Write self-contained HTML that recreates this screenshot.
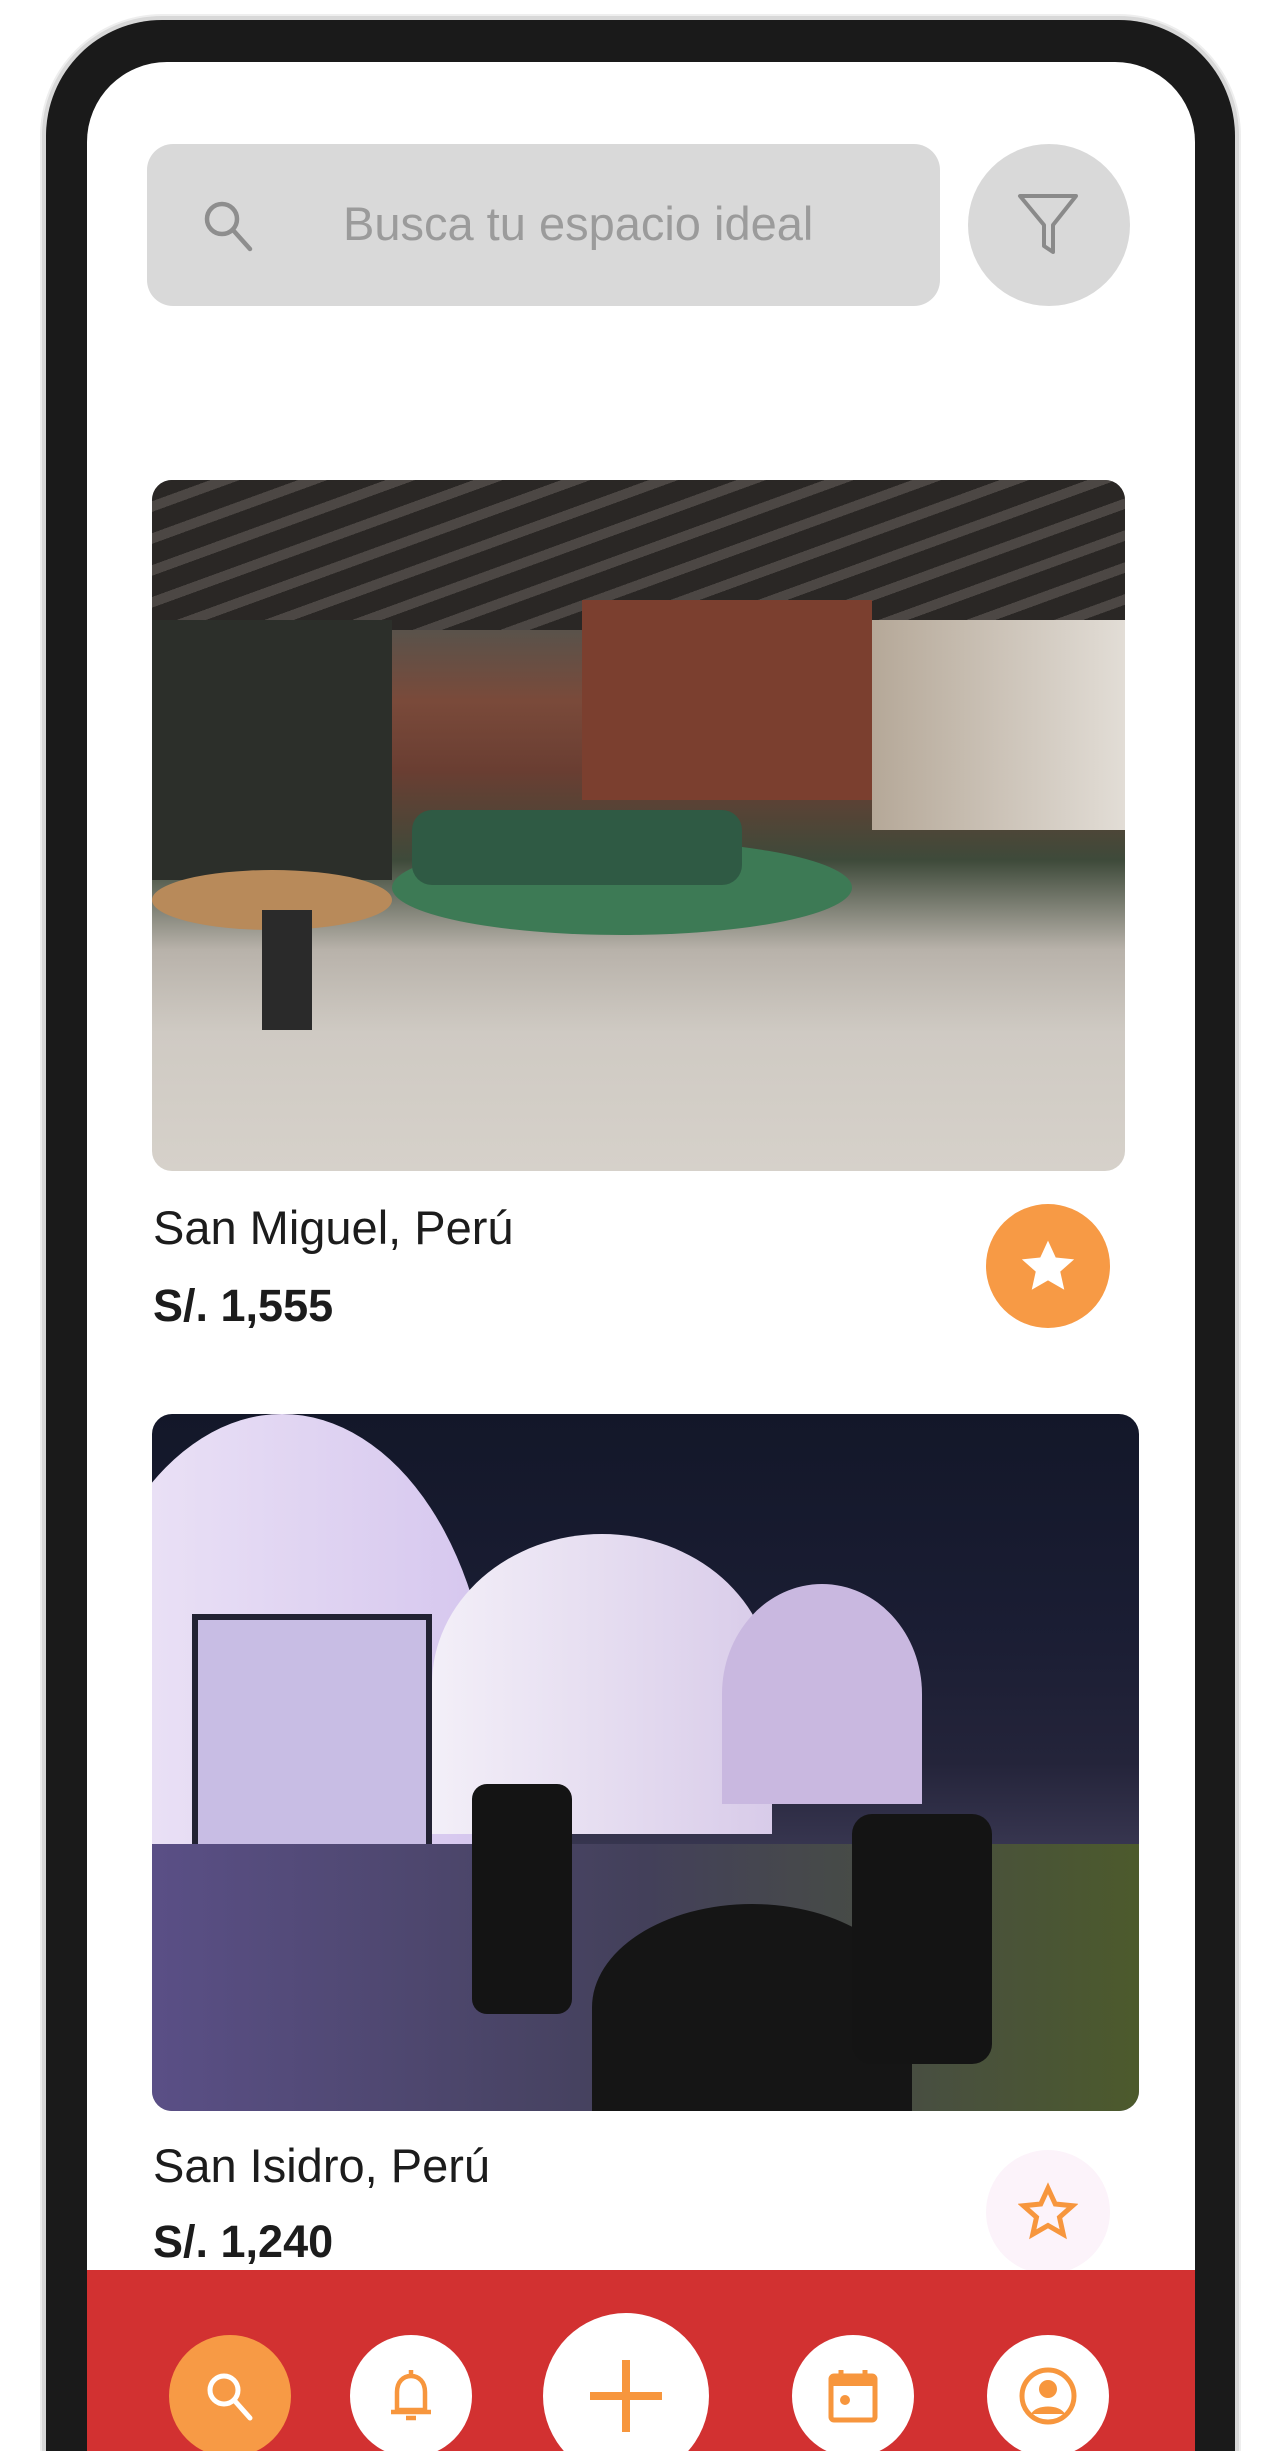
<!DOCTYPE html>
<html><head><meta charset="utf-8"><style>
*{margin:0;padding:0;box-sizing:border-box}
html,body{width:1286px;height:2451px;overflow:hidden}
body{background:#fff;font-family:"Liberation Sans",sans-serif}
#wrap{position:relative;width:1286px;height:2451px;overflow:hidden}
.abs{position:absolute}
.frame{left:42px;top:16px;width:1197px;height:2435px;border-radius:120px 120px 0 0;background:#1a1a1a;border:4px solid #d8d8d8;border-bottom:none;box-shadow:0 0 0 2px #eee}
.screen{left:87px;top:62px;width:1108px;height:2389px;border-radius:80px 80px 0 0;background:#fff;overflow:hidden}
.search{left:147px;top:144px;width:793px;height:162px;border-radius:26px;background:#d9d9d9}
.ph{left:343px;top:196px;font-size:47px;color:#9b9b9b}
.filter{left:968px;top:144px;width:162px;height:162px;border-radius:50%;background:#d9d9d9}
.img1{left:152px;top:480px;width:973px;height:691px;border-radius:20px;overflow:hidden;
background:linear-gradient(180deg,#2d2a28 0%,#4a4540 12%,#5a524a 22%,#7a4a3a 32%,#6a3e32 42%,#3e4a3a 55%,#b8b2aa 68%,#cfcac3 80%,#d6d1ca 100%)}
.img2{left:152px;top:1414px;width:987px;height:697px;border-radius:20px;overflow:hidden;
background:linear-gradient(180deg,#131729 0%,#1a1d33 30%,#24243a 50%,#3c3a55 65%,#4d4a66 80%,#555070 100%)}
.loc{left:153px;font-size:47px;color:#1c1c1c}
.price{left:153px;font-size:45px;font-weight:bold;color:#1c1c1c}
.circ{border-radius:50%;display:flex;align-items:center;justify-content:center}
.nav{left:87px;top:2270px;width:1108px;height:181px;background:#d23131}
</style></head><body><div id="wrap">
<div class="abs frame"></div>
<div class="abs screen"></div>
<div class="abs search"></div>
<svg class="abs" style="left:196px;top:193px" width="64" height="64" viewBox="0 0 64 64"><circle cx="26" cy="26" r="15" fill="none" stroke="#8e8e8e" stroke-width="4.5"/><path d="M37 37 L54 56" stroke="#8e8e8e" stroke-width="4.5" stroke-linecap="round"/></svg>
<div class="abs ph">Busca tu espacio ideal</div>
<div class="abs filter"></div>
<svg class="abs" style="left:1015px;top:190px" width="66" height="70" viewBox="0 0 66 70"><path d="M5 6 H61 L38 35 V62 L29 56 V35 Z" fill="none" stroke="#8a8a8a" stroke-width="4" stroke-linejoin="round"/></svg>

<div class="abs img1">
 <div class="abs" style="left:0;top:0;width:973px;height:150px;background:repeating-linear-gradient(160deg,#2a2725 0 20px,#4c4744 20px 30px)"></div>
 <div class="abs" style="left:430px;top:120px;width:290px;height:200px;background:#7b3f2f"></div>
 <div class="abs" style="left:720px;top:140px;width:253px;height:210px;background:linear-gradient(90deg,#b5a898,#e2ddd6)"></div>
 <div class="abs" style="left:0;top:140px;width:240px;height:260px;background:#2c2f2a"></div>
 <div class="abs" style="left:240px;top:360px;width:460px;height:95px;border-radius:50%;background:#3d7a55"></div>
 <div class="abs" style="left:260px;top:330px;width:330px;height:75px;border-radius:20px;background:#2f5a44"></div>
 <div class="abs" style="left:0;top:390px;width:240px;height:60px;border-radius:50%;background:#b88a5a"></div>
 <div class="abs" style="left:110px;top:430px;width:50px;height:120px;background:#2a2a2a"></div>
</div>
<div class="abs loc" style="top:1200px">San Miguel, Perú</div>
<div class="abs price" style="top:1280px">S/. 1,555</div>
<div class="abs circ" style="left:986px;top:1204px;width:124px;height:124px;background:#f79a45"><svg width="64" height="64" viewBox="0 0 24 24"><path d="M12 2.5l2.9 6.3 6.9.7-5.2 4.6 1.5 6.8L12 17.4l-6.1 3.5 1.5-6.8-5.2-4.6 6.9-.7z" fill="#fff"/></svg></div>

<div class="abs img2">
 <div class="abs" style="left:-80px;top:0;width:420px;height:640px;border-radius:50% 50% 0 0;background:linear-gradient(90deg,#eee6f7,#d5c6ee)"></div>
 <div class="abs" style="left:280px;top:120px;width:340px;height:300px;border-radius:50% 50% 0 0;background:linear-gradient(90deg,#f3eff8,#d8cbe9)"></div>
 <div class="abs" style="left:570px;top:170px;width:200px;height:220px;border-radius:50% 50% 0 0;background:#c9b8e0"></div>
 <div class="abs" style="left:40px;top:200px;width:240px;height:400px;background:#c8bde4;border:6px solid #223"></div>
 <div class="abs" style="left:0;top:430px;width:987px;height:267px;background:linear-gradient(90deg,#5a4f86,#43405a 50%,#4c5a2c)"></div>
 <div class="abs" style="left:440px;top:490px;width:320px;height:207px;border-radius:50% 50% 0 0;background:#151515"></div>
 <div class="abs" style="left:700px;top:400px;width:140px;height:250px;background:#141414;border-radius:20px"></div>
 <div class="abs" style="left:320px;top:370px;width:100px;height:230px;background:#141414;border-radius:15px"></div>
</div>
<div class="abs loc" style="top:2138px">San Isidro, Perú</div>
<div class="abs price" style="top:2216px">S/. 1,240</div>
<div class="abs circ" style="left:986px;top:2150px;width:124px;height:124px;background:#fcf3fa"><svg width="60" height="60" viewBox="0 0 24 24"><path d="M12 2.5l2.9 6.3 6.9.7-5.2 4.6 1.5 6.8L12 17.4l-6.1 3.5 1.5-6.8-5.2-4.6 6.9-.7z" fill="none" stroke="#f7963d" stroke-width="2"/></svg></div>

<div class="abs nav"></div>
<div class="abs circ" style="left:169px;top:2335px;width:122px;height:122px;background:#f79a45"><svg width="64" height="64" viewBox="0 0 64 64"><circle cx="26" cy="26" r="14" fill="none" stroke="#fff" stroke-width="5"/><path d="M36 36 L52 54" stroke="#fff" stroke-width="5" stroke-linecap="round"/></svg></div>
<div class="abs circ" style="left:350px;top:2335px;width:122px;height:122px;background:#fff"><svg width="60" height="64" viewBox="0 0 60 64"><path d="M30 6 V11 M16 46 V28 C16 18 22 12 30 12 C38 12 44 18 44 28 V46 Z M10 48 H50 M25 54 H35" fill="none" stroke="#f7963d" stroke-width="4.5" stroke-linejoin="round"/></svg></div>
<div class="abs circ" style="left:543px;top:2313px;width:166px;height:166px;background:#fff"><svg width="80" height="80" viewBox="0 0 80 80"><path d="M40 4 V76 M4 40 H76" stroke="#f7963d" stroke-width="8"/></svg></div>
<div class="abs circ" style="left:792px;top:2335px;width:122px;height:122px;background:#fff"><svg width="60" height="64" viewBox="0 0 60 64"><rect x="8" y="12" width="44" height="44" rx="3" fill="none" stroke="#f7963d" stroke-width="5"/><rect x="8" y="12" width="44" height="10" fill="#f7963d"/><path d="M18 6 V14 M42 6 V14" stroke="#f7963d" stroke-width="5"/><circle cx="22" cy="36" r="5" fill="#f7963d"/></svg></div>
<div class="abs circ" style="left:987px;top:2335px;width:122px;height:122px;background:#fff"><svg width="64" height="64" viewBox="0 0 64 64"><circle cx="32" cy="32" r="26" fill="none" stroke="#f7963d" stroke-width="5"/><circle cx="32" cy="25" r="9" fill="#f7963d"/><path d="M15 50 C20 40 44 40 49 50 Z" fill="#f7963d"/></svg></div>
</div></body></html>
